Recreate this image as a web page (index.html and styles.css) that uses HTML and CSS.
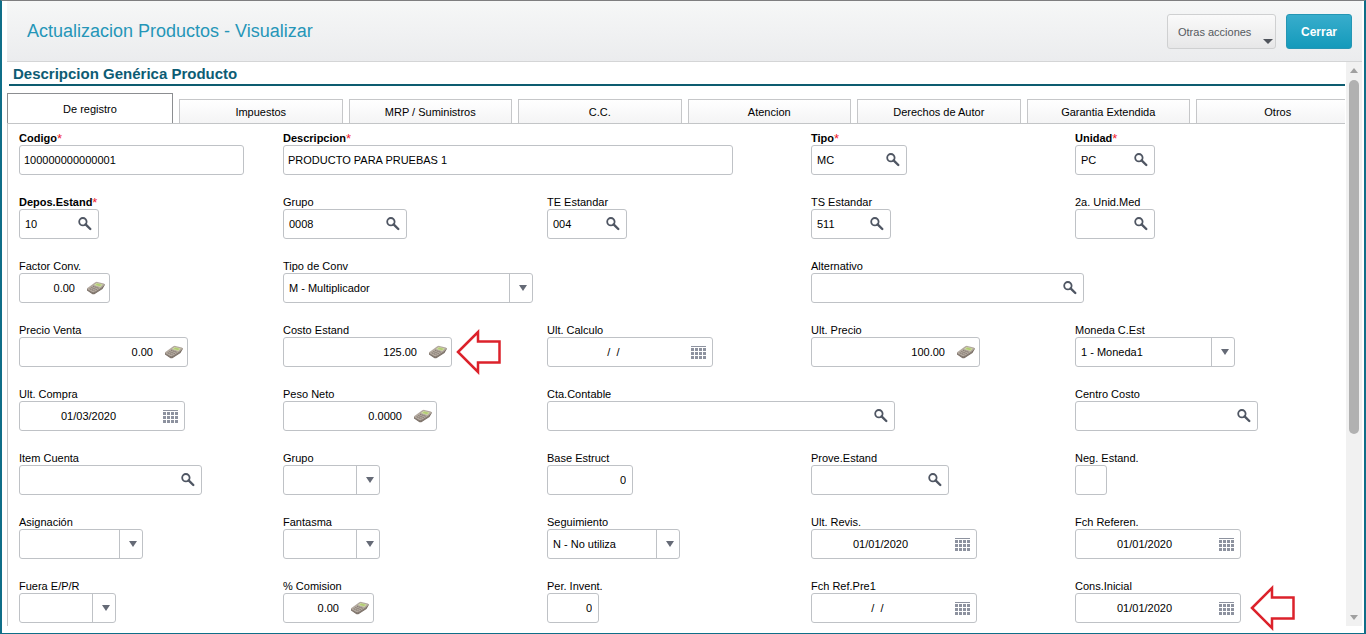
FILE: index.html
```html
<!DOCTYPE html>
<html lang="es">
<head>
<meta charset="utf-8">
<title>Actualizacion Productos - Visualizar</title>
<link rel="stylesheet" href="styles.css">
</head>
<body>
<svg class="sprite" aria-hidden="true">
  <symbol id="search" viewBox="0 0 14 14">
    <circle cx="4.900" cy="4.700" r="3.700" fill="none" stroke="#4f5663" stroke-width="1.800"/>
    <path d="M7.600 7.400L12.300 12" stroke="#4f5663" stroke-width="2.400" stroke-linecap="round"/>
  </symbol>
  <symbol id="calendar" viewBox="0 0 15 13">
    <path d="M0 .5H15" stroke="#8d929f"/>
    <path d="M0 3.500H15M0 7.500H15M0 11.500H15" stroke="#8d929f" stroke-width="3" stroke-dasharray="3 1"/>
  </symbol>
  <symbol id="calc" viewBox="0 0 18 14">
    <path d="M0 7.500V9.500L5.500 13.300Q7 13.600 8.500 12.500L15.500 8L17.800 4V3L6 9Z" fill="#776c63"/>
    <path d="M.4 6.900L8.300 1.300Q9.300 .6 10.500 .9L16.800 2.600Q18.200 3.200 17.200 4.200L14.500 6.800L7.800 11Q6.400 11.900 5 11L.6 8.400Q-.3 7.600 .4 6.900Z" fill="#b3a99f"/>
    <path d="M9.700 1.900L15.900 3.400L13.300 6.100L6.900 4.100Z" fill="#d3dda9"/>
    <path d="M10.300 2.600L14.700 3.700L13 5.300L8.500 3.900Z" fill="#b2cd73"/>
    <path d="M6 5.200L11.800 7.300M4.300 6.500L9.800 8.700M2.700 7.700L7.700 10" stroke="#837970" stroke-width="1" stroke-dasharray="1.600 .6"/>
    <path d="M.6 8.900L5.400 12Q6.500 12.500 7.700 11.800L14.800 7.400" fill="none" stroke="#948a81" stroke-width=".6"/>
  </symbol>
  <symbol id="arrow" viewBox="0 0 46 46">
    <path d="M2 23L22 3V12.500H43.500V33.500H22V43Z" fill="#fff" stroke="#dc222b" stroke-width="2.500"/>
  </symbol>
  <symbol id="down" viewBox="0 0 8 6"><path d="M0 0H8L4 6Z" fill="#656a76"/></symbol>
</svg>
<div class="window">
  <header class="header">
    <h1 class="title">Actualizacion Productos - Visualizar</h1>
    <div class="actions">
      <button class="btn btn-more" type="button">Otras acciones<i class="caret"></i></button>
      <button class="btn btn-primary" type="button">Cerrar</button>
    </div>
  </header>
  <div class="body">
    <main class="content">
      <h2 class="section">Descripcion Genérica Producto</h2>
      <nav class="tabs" role="tablist">
        <button class="tab active" role="tab" aria-selected="true">De registro</button>
        <button class="tab" role="tab">Impuestos</button>
        <button class="tab" role="tab">MRP / Suministros</button>
        <button class="tab" role="tab">C.C.</button>
        <button class="tab" role="tab">Atencion</button>
        <button class="tab" role="tab">Derechos de Autor</button>
        <button class="tab" role="tab">Garantia Extendida</button>
        <button class="tab" role="tab">Otros</button>
      </nav>
      <form class="form">
        <div class="field c1 required"><label for="codigo">Codigo<b>*</b></label><div class="box w225"><input id="codigo" value="100000000000001"></div></div>
        <div class="field c2 span2 required"><label for="desc">Descripcion<b>*</b></label><div class="box w450"><input id="desc" value="PRODUCTO PARA PRUEBAS 1"></div></div>
        <div class="field c4 required"><label for="tipo">Tipo<b>*</b></label><div class="box lookup w96"><input id="tipo" value="MC"><button type="button" aria-label="Buscar"><svg><use href="#search"/></svg></button></div></div>
        <div class="field c5 required"><label for="unidad">Unidad<b>*</b></label><div class="box lookup w80"><input id="unidad" value="PC"><button type="button" aria-label="Buscar"><svg><use href="#search"/></svg></button></div></div>

        <div class="field c1 required"><label for="depos">Depos.Estand<b>*</b></label><div class="box lookup w80"><input id="depos" value="10"><button type="button" aria-label="Buscar"><svg><use href="#search"/></svg></button></div></div>
        <div class="field c2"><label for="grupo">Grupo</label><div class="box lookup w124"><input id="grupo" value="0008"><button type="button" aria-label="Buscar"><svg><use href="#search"/></svg></button></div></div>
        <div class="field c3"><label for="te">TE Estandar</label><div class="box lookup w80"><input id="te" value="004"><button type="button" aria-label="Buscar"><svg><use href="#search"/></svg></button></div></div>
        <div class="field c4"><label for="ts">TS Estandar</label><div class="box lookup w80"><input id="ts" value="511"><button type="button" aria-label="Buscar"><svg><use href="#search"/></svg></button></div></div>
        <div class="field c5"><label for="unid2">2a. Unid.Med</label><div class="box lookup w80"><input id="unid2"><button type="button" aria-label="Buscar"><svg><use href="#search"/></svg></button></div></div>

        <div class="field c1"><label for="factor">Factor Conv.</label><div class="box number w91"><input id="factor" value="0.00"><button type="button" aria-label="Calculadora"><svg><use href="#calc"/></svg></button></div></div>
        <div class="field c2"><label for="tipoconv">Tipo de Conv</label><div class="box combo w250"><select id="tipoconv"><option>M - Multiplicador</option></select><svg><use href="#down"/></svg></div></div>
        <div class="field c4 span2"><label for="alt">Alternativo</label><div class="box lookup w273"><input id="alt"><button type="button" aria-label="Buscar"><svg><use href="#search"/></svg></button></div></div>

        <div class="field c1"><label for="venta">Precio Venta</label><div class="box number w169"><input id="venta" value="0.00"><button type="button" aria-label="Calculadora"><svg><use href="#calc"/></svg></button></div></div>
        <div class="field c2"><label for="costo">Costo Estand</label><div class="box number w169"><input id="costo" value="125.00"><button type="button" aria-label="Calculadora"><svg><use href="#calc"/></svg></button><svg class="pointer"><use href="#arrow"/></svg></div></div>
        <div class="field c3"><label for="calculo">Ult. Calculo</label><div class="box date w166"><input id="calculo" value="/&nbsp;&nbsp;/&nbsp;&nbsp;"><button type="button" aria-label="Calendario"><svg><use href="#calendar"/></svg></button></div></div>
        <div class="field c4"><label for="uprecio">Ult. Precio</label><div class="box number w169"><input id="uprecio" value="100.00"><button type="button" aria-label="Calculadora"><svg><use href="#calc"/></svg></button></div></div>
        <div class="field c5"><label for="moneda">Moneda C.Est</label><div class="box combo w160"><select id="moneda"><option>1 - Moneda1</option></select><svg><use href="#down"/></svg></div></div>

        <div class="field c1"><label for="compra">Ult. Compra</label><div class="box date w166"><input id="compra" value="01/03/2020"><button type="button" aria-label="Calendario"><svg><use href="#calendar"/></svg></button></div></div>
        <div class="field c2"><label for="peso">Peso Neto</label><div class="box number w154"><input id="peso" value="0.0000"><button type="button" aria-label="Calculadora"><svg><use href="#calc"/></svg></button></div></div>
        <div class="field c3 span2"><label for="cta">Cta.Contable</label><div class="box lookup w348"><input id="cta"><button type="button" aria-label="Buscar"><svg><use href="#search"/></svg></button></div></div>
        <div class="field c5"><label for="centro">Centro Costo</label><div class="box lookup w183"><input id="centro"><button type="button" aria-label="Buscar"><svg><use href="#search"/></svg></button></div></div>

        <div class="field c1"><label for="item">Item Cuenta</label><div class="box lookup w183"><input id="item"><button type="button" aria-label="Buscar"><svg><use href="#search"/></svg></button></div></div>
        <div class="field c2"><label for="grupo2">Grupo</label><div class="box combo w97"><select id="grupo2"><option></option></select><svg><use href="#down"/></svg></div></div>
        <div class="field c3"><label for="base">Base Estruct</label><div class="box plain-number w86"><input id="base" value="0"></div></div>
        <div class="field c4"><label for="prove">Prove.Estand</label><div class="box lookup w138"><input id="prove"><button type="button" aria-label="Buscar"><svg><use href="#search"/></svg></button></div></div>
        <div class="field c5"><label for="neg">Neg. Estand.</label><div class="box w32"><input id="neg"></div></div>

        <div class="field c1"><label for="asig">Asignación</label><div class="box combo w124"><select id="asig"><option></option></select><svg><use href="#down"/></svg></div></div>
        <div class="field c2"><label for="fantasma">Fantasma</label><div class="box combo w97"><select id="fantasma"><option></option></select><svg><use href="#down"/></svg></div></div>
        <div class="field c3"><label for="seg">Seguimiento</label><div class="box combo w133"><select id="seg"><option>N - No utiliza</option></select><svg><use href="#down"/></svg></div></div>
        <div class="field c4"><label for="revis">Ult. Revis.</label><div class="box date w166"><input id="revis" value="01/01/2020"><button type="button" aria-label="Calendario"><svg><use href="#calendar"/></svg></button></div></div>
        <div class="field c5"><label for="fchref">Fch Referen.</label><div class="box date w166"><input id="fchref" value="01/01/2020"><button type="button" aria-label="Calendario"><svg><use href="#calendar"/></svg></button></div></div>

        <div class="field c1"><label for="fuera">Fuera E/P/R</label><div class="box combo w97"><select id="fuera"><option></option></select><svg><use href="#down"/></svg></div></div>
        <div class="field c2"><label for="comision">% Comision</label><div class="box number w91"><input id="comision" value="0.00"><button type="button" aria-label="Calculadora"><svg><use href="#calc"/></svg></button></div></div>
        <div class="field c3"><label for="per">Per. Invent.</label><div class="box plain-number w52"><input id="per" value="0"></div></div>
        <div class="field c4"><label for="pre1">Fch Ref.Pre1</label><div class="box date w166"><input id="pre1" value="/&nbsp;&nbsp;/&nbsp;&nbsp;"><button type="button" aria-label="Calendario"><svg><use href="#calendar"/></svg></button></div></div>
        <div class="field c5"><label for="cons">Cons.Inicial</label><div class="box date w166"><input id="cons" value="01/01/2020"><button type="button" aria-label="Calendario"><svg><use href="#calendar"/></svg></button><svg class="pointer"><use href="#arrow"/></svg></div></div>
      </form>
    </main>
    <div class="scrollbar" aria-hidden="true">
      <i class="up"></i>
      <div class="track"><div class="thumb"></div></div>
      <i class="down"></i>
    </div>
  </div>
</div>
</body>
</html>
```

FILE: styles.css
```css
* { box-sizing: border-box; }
body {
  margin: 0;
  background: #fff;
  color: #000;
  font: 11px/13px "Liberation Sans", Arial, sans-serif;
}
button, input, select { font: inherit; color: inherit; margin: 0; }
.sprite { position: absolute; width: 0; height: 0; }

.window {
  display: flex;
  flex-direction: column;
  min-height: 100vh;
  padding: 0 2px 7px 5px;
  border: 2px solid #0f6e88;
  border-top: 1px solid #7e7e80;
  border-bottom-width: 1px;
}

/* Header */
.header {
  display: flex;
  align-items: center;
  justify-content: space-between;
  height: 61px;
  padding: 0 10px 0 20px;
  border-bottom: 1px solid #d4d5d6;
  background: linear-gradient(#f6f7f7, #ebecee);
}
.title { margin: 0; font-size: 18px; line-height: 22px; font-weight: 400; color: #2596b8; }
.actions { display: flex; gap: 10px; }
.btn { position: relative; height: 35px; border-radius: 3px; }
.btn-more {
  width: 109px;
  padding: 2px 23px 0 10px;
  border: 1px solid #cfd0d1;
  background: linear-gradient(#fafafa, #e7e7e8);
  color: #555960;
  text-align: left;
  white-space: nowrap;
}
.caret {
  position: absolute;
  right: 2px;
  bottom: 4px;
  border: 5px solid transparent;
  border-top-color: #50545c;
  border-bottom: 0;
}
.btn-primary {
  width: 66px;
  padding: 2px 0 0;
  border: 1px solid #2596b4;
  background: linear-gradient(#38adcc, #149abb);
  color: #fff;
  font-size: 12px;
  font-weight: 700;
}

/* Body */
.body { display: flex; flex: 1; }
.content { display: flex; flex-direction: column; flex: 1; min-width: 0; }
.section {
  height: 24px;
  margin: 0 0 7px 2px;
  padding: 3px 4px 0;
  border-bottom: 2px solid #0d5c70;
  font-size: 15px;
  line-height: 18px;
  color: #0d5c74;
}
.tabs { display: flex; align-items: flex-end; gap: 6px; overflow: hidden; }
.tab {
  flex: 0 0 12.22%;
  height: 24px;
  padding: 1px 0 0;
  border: 1px solid #c6c7c9;
  border-bottom: 0;
  background: linear-gradient(#fff, #f4f4f5);
  text-align: center;
}
.tab.active { flex-basis: 166px; height: 30px; border-color: #8c8e91; background: #fff; }

/* Form */
.form {
  display: grid;
  flex: 1;
  grid-template-columns: repeat(5, minmax(0, 1fr));
  align-content: start;
  row-gap: 21px;
  padding: 8px 6px 2px 11px;
  border-top: 1px solid #c3c5c7;
  border-left: 1px solid #c3c5c7;
}
.field { display: flex; flex-direction: column; }
.c1 { grid-column-start: 1; }
.c2 { grid-column-start: 2; }
.c3 { grid-column-start: 3; }
.c4 { grid-column-start: 4; }
.c5 { grid-column-start: 5; }
.span2 { grid-column-end: span 2; }
.field label { height: 13px; white-space: nowrap; }
.required label { font-weight: 700; }
.required b { color: #f0202a; font-size: 13px; line-height: 13px; font-weight: 400; vertical-align: top; }

.box {
  display: flex;
  position: relative;
  height: 30px;
  border: 1px solid #bfc2c6;
  border-radius: 3px;
  background: #fff;
}
.box input, .box select {
  flex: 1;
  width: 0;
  min-width: 0;
  padding: 0 4px;
  border: 0;
  background: none;
  outline: 0;
}
.box button {
  display: flex;
  align-items: center;
  justify-content: flex-end;
  padding: 0;
  border: 0;
  background: none;
}
.lookup input { padding: 0 0 0 5px; }
.lookup button { width: 24px; padding-right: 6px; }
.lookup button svg { width: 14px; height: 14px; }
.number input { padding: 0; text-align: right; }
.number button { width: 34px; padding-right: 4px; }
.number button svg { width: 18px; height: 14px; }
.plain-number input { padding: 0 6px; text-align: right; }
.date input { padding: 0; text-align: center; }
.date button { width: 27px; padding-right: 6px; }
.date button svg { width: 15px; height: 13px; }
.combo { align-items: center; }
.combo select { appearance: none; height: 28px; padding: 0 5px; border-right: 1px solid #bfc2c6; border-radius: 0; }
.combo svg { width: 8px; height: 6px; margin: 0 5px 0 9px; }
.pointer {
  position: absolute;
  left: 100%;
  top: -9px;
  width: 46px;
  height: 46px;
  margin-left: 5px;
}
.date .pointer { margin-left: 10px; }

.w32 { width: 32px; }
.w52 { width: 52px; }
.w80 { width: 80px; }
.w86 { width: 86px; }
.w91 { width: 91px; }
.w96 { width: 96px; }
.w97 { width: 97px; }
.w124 { width: 124px; }
.w133 { width: 133px; }
.w138 { width: 138px; }
.w154 { width: 154px; }
.w160 { width: 160px; }
.w166 { width: 166px; }
.w169 { width: 169px; }
.w183 { width: 183px; }
.w225 { width: 225px; }
.w250 { width: 250px; }
.w273 { width: 273px; }
.w348 { width: 348px; }
.w450 { width: 450px; }

/* Scrollbar */
.scrollbar {
  display: flex;
  flex-direction: column;
  align-items: center;
  width: 16px;
  margin-left: 1px;
  padding: 6px 0;
  background: #f1f1f1;
}
.scrollbar i { border: 0 solid transparent; border-width: 0 4px; }
.scrollbar .up { border-bottom: 5px solid #a0a0a0; }
.scrollbar .down { border-top: 5px solid #a0a0a0; }
.track { display: flex; flex: 1; flex-direction: column; width: 10px; padding: 7px 0; }
.thumb { height: 67%; border-radius: 5px; background: #b1b1b1; }
```
